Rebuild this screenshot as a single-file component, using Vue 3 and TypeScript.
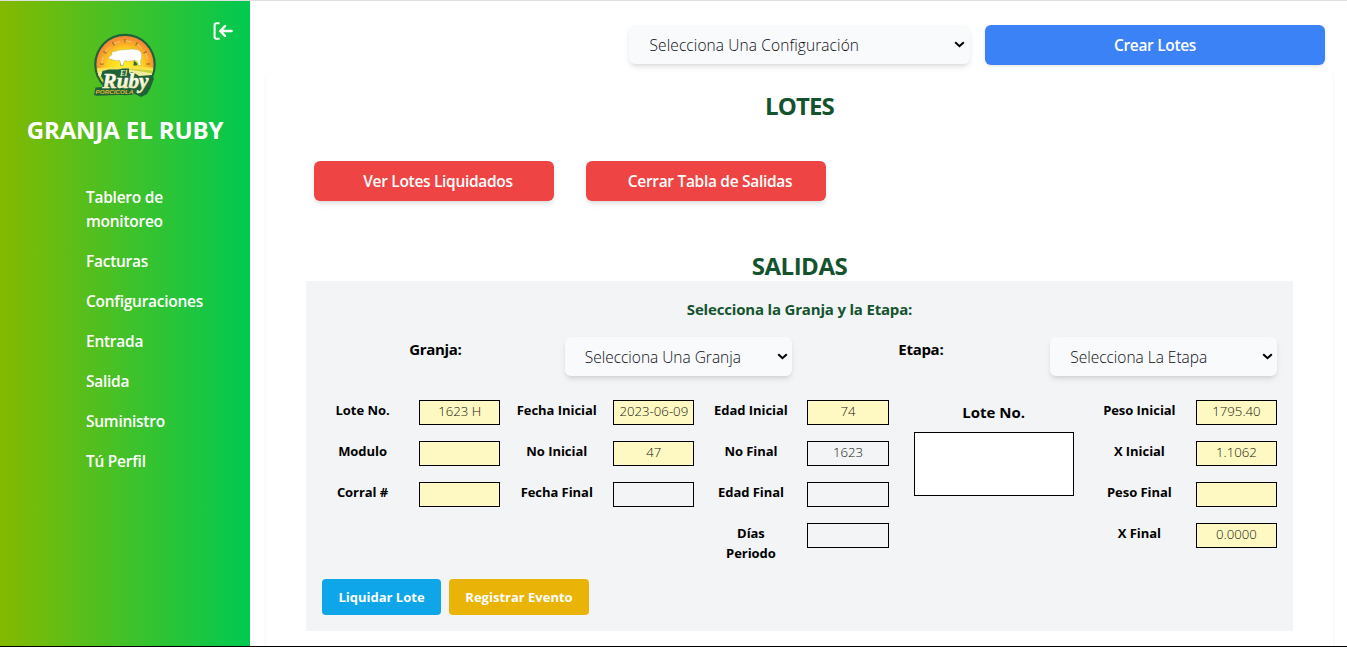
<script setup lang="ts">
interface Field {
  label: string
  value: string
  filled: boolean
}

const menu: string[] = [
  'Tablero de monitoreo',
  'Facturas',
  'Configuraciones',
  'Entrada',
  'Salida',
  'Suministro',
  'Tú Perfil',
]

const leftColumns: Field[][] = [
  [
    { label: 'Lote No.', value: '1623 H', filled: true },
    { label: 'Modulo', value: '', filled: true },
    { label: 'Corral #', value: '', filled: true },
  ],
  [
    { label: 'Fecha Inicial', value: '2023-06-09', filled: true },
    { label: 'No Inicial', value: '47', filled: true },
    { label: 'Fecha Final', value: '', filled: false },
  ],
  [
    { label: 'Edad Inicial', value: '74', filled: true },
    { label: 'No Final', value: '1623', filled: false },
    { label: 'Edad Final', value: '', filled: false },
    { label: 'Días\nPeriodo', value: '', filled: false },
  ],
]

const weights: Field[] = [
  { label: 'Peso Inicial', value: '1795.40', filled: true },
  { label: 'X Inicial', value: '1.1062', filled: true },
  { label: 'Peso Final', value: '', filled: true },
  { label: 'X Final', value: '0.0000', filled: true },
]

const ticks: number[] = [-90, -60, -30, 0, 30, 60, 90]
</script>

<template>
  <div class="app">
    <aside class="sidebar">
      <button class="collapse" aria-label="Cerrar menú">
        <svg width="20" height="18" viewBox="0 0 20 18" fill="none" stroke="#fff">
          <path d="M6.6 1.2H3.3Q1.6 1.2 1.6 2.9V15.1Q1.6 16.8 3.3 16.8H6.6" stroke-width="2" />
          <path d="M18.6 9H7.4M12 4.2L7.2 9L12 13.8" stroke-width="2.4" stroke-linecap="round" stroke-linejoin="round" />
        </svg>
      </button>
      <svg class="logo" width="64" height="64" viewBox="0 0 64 64">
        <defs>
          <radialGradient id="sun" cx="50%" cy="55%" r="52%">
            <stop offset="0" stop-color="#fff22e" />
            <stop offset=".6" stop-color="#fdd31c" />
            <stop offset=".85" stop-color="#f9a32a" />
            <stop offset="1" stop-color="#f58a34" />
          </radialGradient>
          <linearGradient id="cream" x1="0" y1="0" x2="0" y2="1">
            <stop offset=".4" stop-color="#ffffff" />
            <stop offset="1" stop-color="#ecd68a" />
          </linearGradient>
          <clipPath id="disc"><circle cx="32" cy="31.5" r="28.5" /></clipPath>
        </defs>
        <circle cx="32" cy="31.5" r="30.8" fill="#1e6238" />
        <circle cx="32" cy="31.5" r="28.6" fill="url(#sun)" />
        <g stroke="#7a6420" stroke-width="1">
          <line v-for="t in ticks" :key="t" x1="32" y1="6" x2="32" y2="9.6" :transform="`rotate(${t} 32 31)`" />
        </g>
        <path d="M9 31A23 23 0 0 1 55 31" fill="none" stroke="#fbe0b0" stroke-width=".8" stroke-dasharray="7 5" opacity=".7" />
        <g clip-path="url(#disc)">
          <path d="M0 36Q20 32 64 35V64H0Z" fill="#f7e24e" />
          <path d="M0 40Q24 33 64 38V64H0Z" fill="#c9cf3c" />
          <path d="M4 39Q26 33 62 41L60 48Q30 36 4 44Z" fill="#f1ec9a" />
        </g>
        <path d="M28 27L31 29.5L30 32.5H27.4ZM41 27.5L44.6 31L43.6 32.5H40.4L40.8 29Z" fill="#2b6b35" />
        <path
          d="M15.6 25.8L15.8 24L18.8 21.8L19.2 18.2L22 18.6Q26 16.2 32 16.8Q40 15.2 45 16.8Q49 18.6 48.8 23Q48.6 26 47.6 27.6L48 32.5H45.6L44.4 28.6L42 27.2Q36 28.8 31.6 27.8L30 32.5H28L26.8 27.4Q22 28.2 18.8 26.6Z"
          fill="#fff"
          stroke="#8b8a4c"
          stroke-width=".35"
        />
        <path
          d="M1 62L2.5 54.5L9.5 54L10.5 47L8 43L9.5 38L16 36.5H25L30 35.5H36V40L39 39L43 41L46 43L59 42L61 45.5L57.5 55L54 61L48 64L42 61L38 61.5L4 62.8Z"
          fill="#1e6238"
        />
        <g font-style="italic" font-weight="700">
          <text x="27" y="43" class="mark" font-size="7.5" fill="#f6edc2">El</text>
          <text
            x="9.5"
            y="55"
            class="mark"
            font-size="21"
            textLength="46"
            lengthAdjust="spacingAndGlyphs"
            fill="url(#cream)"
            stroke="#fbf3cf"
            stroke-width=".6"
          >Ruby</text>
          <text x="2.5" y="60.6" class="mark-sub" font-size="5.8" textLength="38" lengthAdjust="spacingAndGlyphs" fill="#e3b832">PORCICOLA</text>
        </g>
      </svg>
      <h1 class="brand">GRANJA EL RUBY</h1>
      <nav class="menu">
        <a v-for="m in menu" :key="m">{{ m }}</a>
      </nav>
    </aside>

    <main class="main">
      <div class="toolbar">
        <div class="select wide">
          <span>Selecciona Una Configuración</span>
          <svg class="chev" width="11" height="7" viewBox="0 0 11 7"><path d="M1.2 1.2L5.5 5.2L9.8 1.2" /></svg>
        </div>
        <button class="btn create">Crear Lotes</button>
      </div>

      <section class="card">
        <h2 class="title">LOTES</h2>
        <div class="actions">
          <button class="btn red">Ver Lotes Liquidados</button>
          <button class="btn red">Cerrar Tabla de Salidas</button>
        </div>
        <h2 class="title salidas">SALIDAS</h2>

        <div class="panel">
          <h3 class="hint">Selecciona la Granja y la Etapa:</h3>
          <div class="filters">
            <label>Granja:</label>
            <div class="select">
              <span>Selecciona Una Granja</span>
              <svg class="chev" width="11" height="7" viewBox="0 0 11 7"><path d="M1.2 1.2L5.5 5.2L9.8 1.2" /></svg>
            </div>
            <label>Etapa:</label>
            <div class="select">
              <span>Selecciona La Etapa</span>
              <svg class="chev" width="11" height="7" viewBox="0 0 11 7"><path d="M1.2 1.2L5.5 5.2L9.8 1.2" /></svg>
            </div>
          </div>

          <div class="columns">
            <div v-for="(col, i) in leftColumns" :key="i" class="fields">
              <div v-for="f in col" :key="f.label" class="field">
                <span class="name">{{ f.label }}</span>
                <span class="value" :class="{ filled: f.filled }">{{ f.value }}</span>
              </div>
            </div>
            <div class="note">
              <span>Lote No.</span>
              <div class="note-box"></div>
            </div>
            <div class="fields">
              <div v-for="f in weights" :key="f.label" class="field">
                <span class="name">{{ f.label }}</span>
                <span class="value" :class="{ filled: f.filled }">{{ f.value }}</span>
              </div>
            </div>
          </div>

          <div class="footer">
            <button class="small blue">Liquidar Lote</button>
            <button class="small yellow">Registrar Evento</button>
          </div>
        </div>
      </section>
    </main>
  </div>
</template>

<style>
body {
  margin: 0;
  overflow: hidden;
}
</style>

<style scoped>
* {
  box-sizing: border-box;
}
.app {
  display: flex;
  height: 647px;
  overflow: hidden;
  border-top: 1px solid #dedfe0;
  border-bottom: 1px solid #000;
  background: #fff;
  color: #000;
  font-family: 'Open Sans', 'Noto Sans', sans-serif;
  font-size: 16px;
  line-height: 24px;
}
h1,
h2,
h3 {
  margin: 0;
}
button {
  border: 0;
  padding: 0;
  font-family: inherit;
}
.sidebar {
  flex: 0 0 250px;
  display: flex;
  flex-direction: column;
  align-items: center;
  background: linear-gradient(to right, #84b900, #00c951);
  color: #fff;
}
.collapse {
  align-self: flex-end;
  height: 18px;
  margin: 21px 17px 0 0;
  background: none;
}
.collapse svg {
  display: block;
}
.logo {
  margin-top: -7px;
}
.brand {
  margin-top: 17px;
  font-size: 24px;
  line-height: 32px;
  font-weight: 700;
  white-space: nowrap;
  letter-spacing: -0.13px;
}
.menu {
  display: flex;
  flex-direction: column;
  gap: 16px;
  width: 128px;
  margin: 39px 0 0 50px;
  font-size: 15.5px;
  font-weight: 600;
  letter-spacing: -0.26px;
}
.main {
  flex: 1;
  padding: 24px 14px 0 16px;
}
.toolbar {
  display: flex;
  justify-content: flex-end;
  gap: 15px;
  padding-right: 8px;
}
.select {
  display: flex;
  align-items: center;
  justify-content: space-between;
  height: 39px;
  padding: 0 4px 0 20px;
  border-radius: 6px;
  background: #f9fafc;
  color: #0c0e12;
  font-size: 15.5px;
  font-weight: 350;
  letter-spacing: -0.02px;
  white-space: nowrap;
  box-shadow: 0 4px 6px -1px rgba(0, 0, 0, 0.1), 0 2px 4px -2px rgba(0, 0, 0, 0.1);
}
.select span {
  padding-top: 1px;
}
.wide {
  width: 341px;
  margin-right: 0.5px;
  padding-left: 21px;
  padding-right: 5px;
  letter-spacing: 0.1px;
}
.chev {
  margin-top: -1px;
}
.chev path {
  fill: none;
  stroke: #000;
  stroke-width: 2;
}
.btn {
  height: 40px;
  border-radius: 6px;
  color: #fff;
  font-size: 15.5px;
  font-weight: 600;
  letter-spacing: -0.31px;
  white-space: nowrap;
  box-shadow: 0 4px 6px -1px rgba(0, 0, 0, 0.1), 0 2px 4px -2px rgba(0, 0, 0, 0.1);
}
.create {
  width: 340px;
  background: #3b82f6;
  box-shadow: 0 1px 3px rgba(0, 0, 0, 0.12);
}
.card {
  width: 1067px;
  height: 620px;
  margin-top: 8px;
  padding: 17px 40px 0;
  border-radius: 6px;
  box-shadow: 0 1px 3px rgba(0, 0, 0, 0.08);
  clip-path: inset(1px -6px -6px -6px);
}
.title {
  font-size: 24px;
  line-height: 32px;
  font-weight: 700;
  letter-spacing: -0.85px;
  color: #14532d;
  text-align: center;
}
.actions {
  display: flex;
  gap: 32px;
  margin: 39px 8px 49px;
}
.red {
  width: 240px;
  padding-left: 8px;
  background: #ef4444;
}
.salidas {
  height: 31px;
  letter-spacing: -0.5px;
}
.panel {
  height: 350px;
  padding: 16px;
  background: #f3f4f6;
}
.hint {
  font-size: 15px;
  line-height: 24px;
  font-weight: 700;
  letter-spacing: -0.18px;
  color: #14532d;
  text-align: center;
}
.filters {
  display: grid;
  grid-template-columns: repeat(4, 1fr);
  gap: 16px;
  margin-top: 16px;
}
.filters label {
  font-size: 15px;
  font-weight: 700;
  letter-spacing: -0.3px;
  text-align: center;
}
.columns {
  display: grid;
  grid-template-columns: repeat(5, minmax(0, 1fr));
  gap: 16px;
  height: 163px;
  margin-top: 24px;
}
.fields {
  display: flex;
  flex-direction: column;
  gap: 16px;
}
.field {
  display: grid;
  grid-template-columns: repeat(2, minmax(0, 1fr));
  column-gap: 16px;
  height: 25px;
  font-size: 13.2px;
  line-height: 20px;
  text-align: center;
}
.name {
  font-size: 13px;
  font-weight: 700;
  letter-spacing: -0.05px;
  white-space: pre;
}
.value {
  height: 25px;
  border: 1px solid #000;
  color: #15160c;
  font-weight: 350;
  white-space: nowrap;
}
.filled {
  background: #fef9c3;
}
.note {
  display: flex;
  flex-direction: column;
  align-items: center;
  gap: 8px;
  font-size: 15px;
  font-weight: 700;
}
.note-box {
  width: 160px;
  height: 64px;
  border: 1px solid #000;
  background: #fff;
}
.footer {
  display: flex;
  gap: 8px;
  margin-top: 16px;
}
.small {
  height: 36px;
  border-radius: 4px;
  color: #fff;
  font-size: 13px;
  font-weight: 750;
  white-space: nowrap;
}
.blue {
  width: 119px;
  background: #0ea5e9;
}
.yellow {
  width: 140px;
  background: #eab308;
}
.mark {
  font-family: 'Liberation Serif', serif;
}
.mark-sub {
  font-family: 'Liberation Sans', sans-serif;
}
</style>
